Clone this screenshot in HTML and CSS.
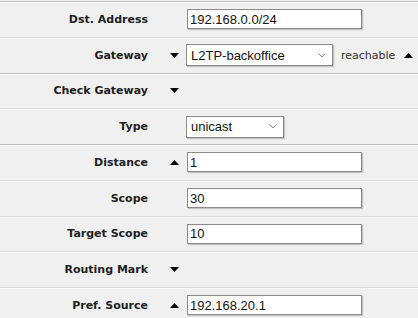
FILE: index.html
```html
<!doctype html>
<html lang="en">
    <head>
        <title>Route</title>
        <meta charset="UTF-8"/>
        <link rel="stylesheet" href="styles.css">
    </head>
    <body>
        <div class="form">
            <div class="row group">
                <label class="name">Dst. Address</label>
                <span class="toggle"></span>
                <div class="value"><input class="field" type="text" value="192.168.0.0/24"/></div>
            </div>
            <div class="row">
                <label class="name">Gateway</label>
                <span class="toggle"><svg class="arrow" width="9" height="5"><polygon points="0,0 9,0 4.5,5"/></svg></span>
                <div class="value">
                    <div class="select wide">L2TP-backoffice<svg class="chevron" width="8" height="5"><polyline points="0.5,0.5 4,4 7.5,0.5"/></svg></div>
                    <span class="state">reachable</span>
                    <svg class="arrow" width="9" height="5"><polygon points="0,5 9,5 4.5,0"/></svg>
                </div>
            </div>
            <div class="row group">
                <label class="name">Check Gateway</label>
                <span class="toggle"><svg class="arrow" width="9" height="5"><polygon points="0,0 9,0 4.5,5"/></svg></span>
                <div class="value"></div>
            </div>
            <div class="row">
                <label class="name">Type</label>
                <span class="toggle"></span>
                <div class="value">
                    <div class="select narrow">unicast<svg class="chevron" width="8" height="5"><polyline points="0.5,0.5 4,4 7.5,0.5"/></svg></div>
                </div>
            </div>
            <div class="row group">
                <label class="name">Distance</label>
                <span class="toggle"><svg class="arrow" width="9" height="5"><polygon points="0,5 9,5 4.5,0"/></svg></span>
                <div class="value"><input class="field" type="text" value="1"/></div>
            </div>
            <div class="row">
                <label class="name">Scope</label>
                <span class="toggle"></span>
                <div class="value"><input class="field" type="text" value="30"/></div>
            </div>
            <div class="row">
                <label class="name">Target Scope</label>
                <span class="toggle"></span>
                <div class="value"><input class="field" type="text" value="10"/></div>
            </div>
            <div class="row">
                <label class="name">Routing Mark</label>
                <span class="toggle"><svg class="arrow" width="9" height="5"><polygon points="0,0 9,0 4.5,5"/></svg></span>
                <div class="value"></div>
            </div>
            <div class="row">
                <label class="name">Pref. Source</label>
                <span class="toggle"><svg class="arrow" width="9" height="5"><polygon points="0,5 9,5 4.5,0"/></svg></span>
                <div class="value"><input class="field" type="text" value="192.168.20.1"/></div>
            </div>
        </div>
    </body>
</html>
```

FILE: styles.css
```css
body {
    margin: 0;
    padding-top: 1px;
    background-color: #f0f0f0;
    font-family: "DejaVu Sans", Verdana, sans-serif;
    font-size: 11px;
    color: #222222;
    overflow: hidden;
}
.row {
    display: grid;
    grid-template-columns: 148px 39px 1fr;
    align-items: center;
    height: 35.75px;
    box-sizing: border-box;
    border-top: 1px solid #dcdcdc;
    box-shadow: inset 0 1px 0 #f8f8f8;
}
.row.group {
    border-top: 1px solid #bdbdbd;
    box-shadow: inset 0 1px 0 #ffffff;
}
.name {
    font-weight: bold;
    text-align: right;
    color: #1e1e1e;
}
.toggle {
    display: flex;
    align-items: center;
    padding-left: 22px;
}
.arrow {
    display: block;
    fill: #000000;
}
.value {
    display: flex;
    align-items: center;
}
.field {
    width: 175px;
    height: 20px;
    box-sizing: border-box;
    margin: 0;
    padding: 0 2px;
    font-family: "Liberation Sans", Arial, sans-serif;
    font-size: 13px;
    color: #111111;
    background-color: #ffffff;
    border: 1px solid #8c8c8c;
    border-radius: 0;
    box-shadow: 1px 1px 1px rgba(0, 0, 0, 0.2);
    outline: none;
}
.select {
    display: flex;
    align-items: center;
    justify-content: space-between;
    height: 22px;
    box-sizing: border-box;
    margin-left: -1px;
    padding: 0 6px 0 4px;
    font-family: "Liberation Sans", Arial, sans-serif;
    font-size: 13px;
    color: #111111;
    background-color: #ffffff;
    border: 1px solid #8c8c8c;
    box-shadow: 1px 1px 1px rgba(0, 0, 0, 0.2);
}
.select.wide {
    width: 147px;
}
.select.narrow {
    width: 98px;
}
.chevron {
    fill: none;
    stroke: #8a8a8a;
    stroke-width: 1;
}
.state {
    margin: 0 9px 0 8px;
    color: #333333;
}
```
